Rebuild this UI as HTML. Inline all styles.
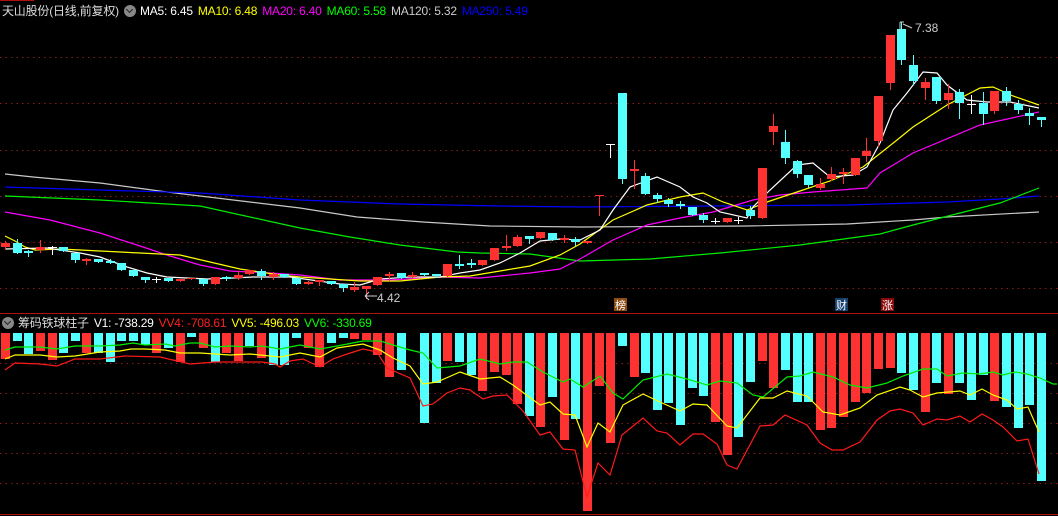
<!DOCTYPE html>
<html><head><meta charset="utf-8">
<style>
html,body{margin:0;padding:0;background:#000;width:1058px;height:516px;overflow:hidden}
body{position:relative;font-family:"Liberation Sans","Noto Sans CJK SC",sans-serif}
.hdr{position:absolute;left:2px;top:4px;font-size:12px;white-space:nowrap;color:#ddd;line-height:15px;letter-spacing:-0.2px}
.hdr span{margin-right:5px}
.ic{display:inline-block;width:12px;height:12px;border-radius:50%;background:#888;vertical-align:-2px;margin-right:4px;position:relative}
.ic:after{content:"";position:absolute;left:3px;top:2px;width:4px;height:4px;border-right:1.5px solid #222;border-bottom:1.5px solid #222;transform:rotate(45deg)}
svg{position:absolute;left:0;top:0}
</style></head><body>
<svg id="s" width="1058" height="516" xmlns="http://www.w3.org/2000/svg">
<text x="915" y="32" fill="#ccc" font-size="12" font-family="Liberation Sans">7.38</text>
<path d="M900 22 L900 32 M900 22 L904 22 M903 24 L912 28" stroke="#ccc" fill="none" stroke-width="1"/>
<text x="377" y="302" fill="#ccc" font-size="12" font-family="Liberation Sans">4.42</text>
<path d="M365 296 L377 296 M365 296 L369 292 M365 296 L369 300" stroke="#ccc" fill="none"/>
<rect x="614" y="298" width="13" height="13" fill="#8a4a10"/>
<text x="615" y="309" fill="#fff" font-size="11" font-family="Noto Sans CJK SC">榜</text>
<rect x="835" y="298" width="13" height="13" fill="#17406e"/>
<text x="836" y="309" fill="#fff" font-size="11" font-family="Noto Sans CJK SC">财</text>
<rect x="881" y="298" width="13" height="13" fill="#8a0a0a"/>
<text x="882" y="309" fill="#fff" font-size="11" font-family="Noto Sans CJK SC">涨</text>
</svg>
<div class="hdr"><span>天山股份(日线,前复权)</span><i class="ic"></i><span style="color:#fff">MA5: 6.45</span><span style="color:#ffff00">MA10: 6.48</span><span style="color:#ff00ff">MA20: 6.40</span><span style="color:#00ff00">MA60: 5.58</span><span style="color:#ccc">MA120: 5.32</span><span style="color:#0000ff">MA250: 5.49</span></div>
<div class="hdr" style="top:316px"><i class="ic"></i><span>筹码铁球柱子</span><span style="color:#fff">V1: -738.29</span><span style="color:#ff2020">VV4: -708.61</span><span style="color:#ffff00">VV5: -496.03</span><span style="color:#00ff00">VV6: -330.69</span></div>
<script>
var s=document.getElementById('s'),h='';
var R='#ff3232',C='#54ffff',W='#fff';
function ln(x1,y1,x2,y2,c,d){h+='<line x1="'+x1+'" y1="'+y1+'" x2="'+x2+'" y2="'+y2+'" stroke="'+c+'" stroke-width="1"'+(d?' stroke-dasharray="1.5,4"':'')+'/>';}
function rc(x,y,w,hh,c){h+='<rect x="'+x+'" y="'+y+'" width="'+w+'" height="'+Math.max(1,hh)+'" fill="'+c+'"/>';}
function pl(p,c){var a=[];for(var i=0;i<p.length;i+=2)a.push(p[i]+','+p[i+1]);h+='<polyline points="'+a.join(' ')+'" fill="none" stroke="'+c+'" stroke-width="1.2"/>';}
[57,103,150,196,242,288,363,393,423,453,483].forEach(function(y){ln(0,y+.5,1058,y+.5,'#8a1a1a',1);});
ln(0,313.5,1058,313.5,'#b01010');ln(0,514.5,1058,514.5,'#b01010');ln(0,0.5,34,0.5,'#b01010');
var b=[['r',359],['c',341],['c',354],['r',351],['r',360],['c',353],['c',341],['r',353],['c',353],['c',362],['c',341],['c',341],['c',345],['r',353],['c',348],['r',362],['c',337],['r',348],['c',362],['r',353],['r',361],['c',346],['r',358],['c',365],['c',365],['c',338],['r',348],['r',367],['c',343],['c',338],['r',339],['r',340],['r',355],['r',377],['c',370],null,['c',423],['c',383],['r',361],['c',362],['c',375],['r',391],['r',372],['r',375],['r',404],['c',416],['r',427],['c',397],['r',440],['c',419],['r',511],['r',386],['r',443],['c',346],['r',377],['c',373],['c',410],['c',403],['c',425],['c',388],['c',396],['r',422],['r',455],['c',437],['c',382],['r',361],['r',388],['c',370],['c',402],['c',402],['r',430],['r',428],['r',417],['r',402],['r',393],['r',369],['r',368],['c',373],['c',390],['r',412],['c',383],['r',394],['c',383],['c',400],['c',375],['r',401],['c',407],['c',428],['c',405],['c',481]];
function X(i){return Math.round(1+11.64*i);}
b.forEach(function(v,i){if(!v)return;rc(X(i),333,9,v[1]-333,v[0]=='r'?R:C);});
pl([5,174,33,177,100,183,167,192,200,196,300,208,357,217,423,222,490,226,580,227,747,226,847,224,913,220,947,217,1039,212],'#c8c8c8');
pl([5,187,100,190,200,193,300,200,400,204,500,206,580,207,847,205,947,202,1000,199,1039,196],'#0000ff');
pl([5,196,100,200,200,206,300,228,350,237,400,245,457,252,480,253,530,254,580,261,650,259,720,253,800,245,880,234,913,225,960,213,1000,203,1039,188],'#00ee00');
pl([5,212,50,220,100,233,140,246,170,256,200,265,230,271,270,273,300,275,340,280,390,280,440,277,480,278,530,273,560,269,580,259,613,240,647,225,680,218,713,212,753,200,780,195,813,192,840,190,867,188,880,173,913,153,980,125,1039,112],'#ff00ff');
pl([5,236,15,241,25,247,35,250,60,249,100,251,140,253,180,255,240,269,280,275,300,277,360,281,400,281,440,277,470,276,500,271,530,266,560,255,580,244,613,220,647,205,680,197,703,193,723,202,747,210,767,202,797,192,830,181,863,167,897,140,913,127,947,105,980,88,993,87,1013,96,1039,105],'#ffff00');
pl([5,249,47,248,80,253,100,257,127,267,147,273,167,277,187,278,207,279,233,278,253,277,290,277,340,284,360,285,380,279,410,277,440,277,460,273,480,270,500,263,520,253,540,241,560,239,580,240,600,230,613,210,630,187,657,177,680,187,693,197,707,203,720,212,747,218,753,207,770,190,797,165,813,163,830,177,853,175,867,167,880,143,893,110,907,93,923,72,937,73,947,85,967,100,987,102,1010,102,1039,108],'#ffffff');
var k=[['r',243,247,241,249],['c',243,253,239,253],['c',251,253,250,256],['r',247,250,240,252],['w',247,248,246,254],['c',247,251,247,251],['c',253,260,253,262],['r',259,261,258,264],['c',259,262,259,262],['c',261,263,259,263],['c',263,270,263,270],['c',270,276,270,276],['c',277,280,277,282],['w',279,279,277,282],['c',278,281,278,281],['r',279,281,279,281],['r',278,279,278,279],['c',279,284,278,285],['r',277,284,277,284],['c',277,279,276,280],['r',275,278,271,279],['r',270,274,270,274],['c',271,276,269,279],['r',274,277,272,279],['c',274,277,274,277],['c',278,284,278,284],['r',282,284,281,284],['r',280,282,280,285],['c',281,284,281,284],['c',284,288,284,291],['r',287,290,282,291],['r',286,289,286,298],['r',277,285,277,285],['r',274,276,272,280],['c',273,278,273,278],['r',275,277,272,278],['c',273,275,273,275],['c',274,276,274,277],['r',264,276,264,276],['c',264,266,255,268],['c',263,265,259,267],['r',260,265,260,265],['r',248,260,248,260],['r',246,248,235,250],['r',237,246,235,246],['c',236,239,236,243],['r',232,238,232,238],['c',233,240,233,240],['r',238,240,235,242],['c',239,242,237,245],['r',241,243,241,243],['r',195,196,195,215],['w',144,145,144,157],['c',93,179,93,183],['r',169,171,160,188],['c',176,194,173,194],['c',195,199,193,202],['c',200,204,198,206],['c',204,206,201,208],['c',207,215,207,215],['c',215,220,213,222],['w',221,221,218,223],['r',218,222,218,222],['w',220,220,217,223],['c',210,216,206,218],['r',168,218,168,218],['r',126,132,114,144],['c',142,158,130,163],['c',161,174,160,177],['c',175,185,175,187],['r',184,188,178,189],['r',174,179,167,180],['r',172,174,168,183],['r',158,175,158,175],['r',151,156,138,161],['r',96,141,96,146],['r',35,83,35,89],['c',29,60,22,64],['c',65,81,55,84],['r',82,88,78,99],['c',77,101,77,103],['r',93,100,84,108],['c',92,103,89,118],['w',104,104,95,113],['c',103,114,92,124],['r',91,111,91,113],['c',91,101,87,105],['c',104,110,100,113],['c',113,116,108,124],['c',117,120,117,126]];
k.forEach(function(v,i){var x=X(i),c=v[0]=='r'?R:v[0]=='c'?C:W;ln(x+4.5,v[3],x+4.5,v[4]+1,c);rc(x,v[1],9,v[2]-v[1],c);});
pl([5,350,15,347,40,347,57,349,75,346,100,346,120,345,133,343,145,345,165,344,175,346,190,343,200,343,215,347,230,346,250,347,262,346,280,349,300,345,320,349,337,346,363,341,380,341,393,345,410,350,423,353,437,368,460,366,480,359,500,364,513,362,527,362,543,372,563,382,570,379,583,387,600,376,613,393,623,399,643,380,667,374,687,379,707,385,720,381,737,383,753,395,763,397,787,377,800,376,813,372,833,377,850,385,867,388,887,383,903,376,923,369,937,369,947,376,963,373,980,374,993,372,1003,375,1015,372,1027,374,1040,378,1053,384,1057,384],'#00ee00');
pl([5,359,15,355,40,355,57,357,75,356,100,352,120,351,131,349,145,349,165,350,180,353,200,353,230,355,250,354,280,357,300,353,320,357,337,348,363,344,380,350,393,358,410,366,423,384,437,382,460,372,480,379,500,377,513,385,540,405,550,402,563,414,575,415,587,447,598,423,610,432,623,405,643,394,660,402,680,411,693,404,707,405,727,426,737,428,760,398,773,398,787,391,807,396,823,412,840,415,860,408,877,395,900,387,910,390,923,397,937,393,960,391,970,395,982,389,993,395,1007,400,1017,409,1028,407,1039,432],'#ffff00');
pl([5,370,15,363,40,364,57,366,75,359,100,359,125,356,160,357,190,364,215,362,240,362,262,362,275,364,280,367,290,361,303,359,320,367,333,359,347,354,363,349,377,352,387,368,410,378,423,406,433,404,447,393,460,388,470,390,483,399,493,396,507,395,523,411,540,435,550,432,563,449,575,450,587,497,598,463,610,475,622,435,643,418,657,431,667,433,680,445,693,434,703,434,717,444,727,465,737,469,760,426,773,425,785,415,807,425,820,443,832,450,843,450,860,442,877,420,890,411,900,409,913,413,923,425,937,419,947,420,960,416,970,422,982,414,993,420,1003,427,1017,441,1028,439,1039,474],'#ff1a1a');
s.insertAdjacentHTML('afterbegin',h);
</script>
</body></html>
